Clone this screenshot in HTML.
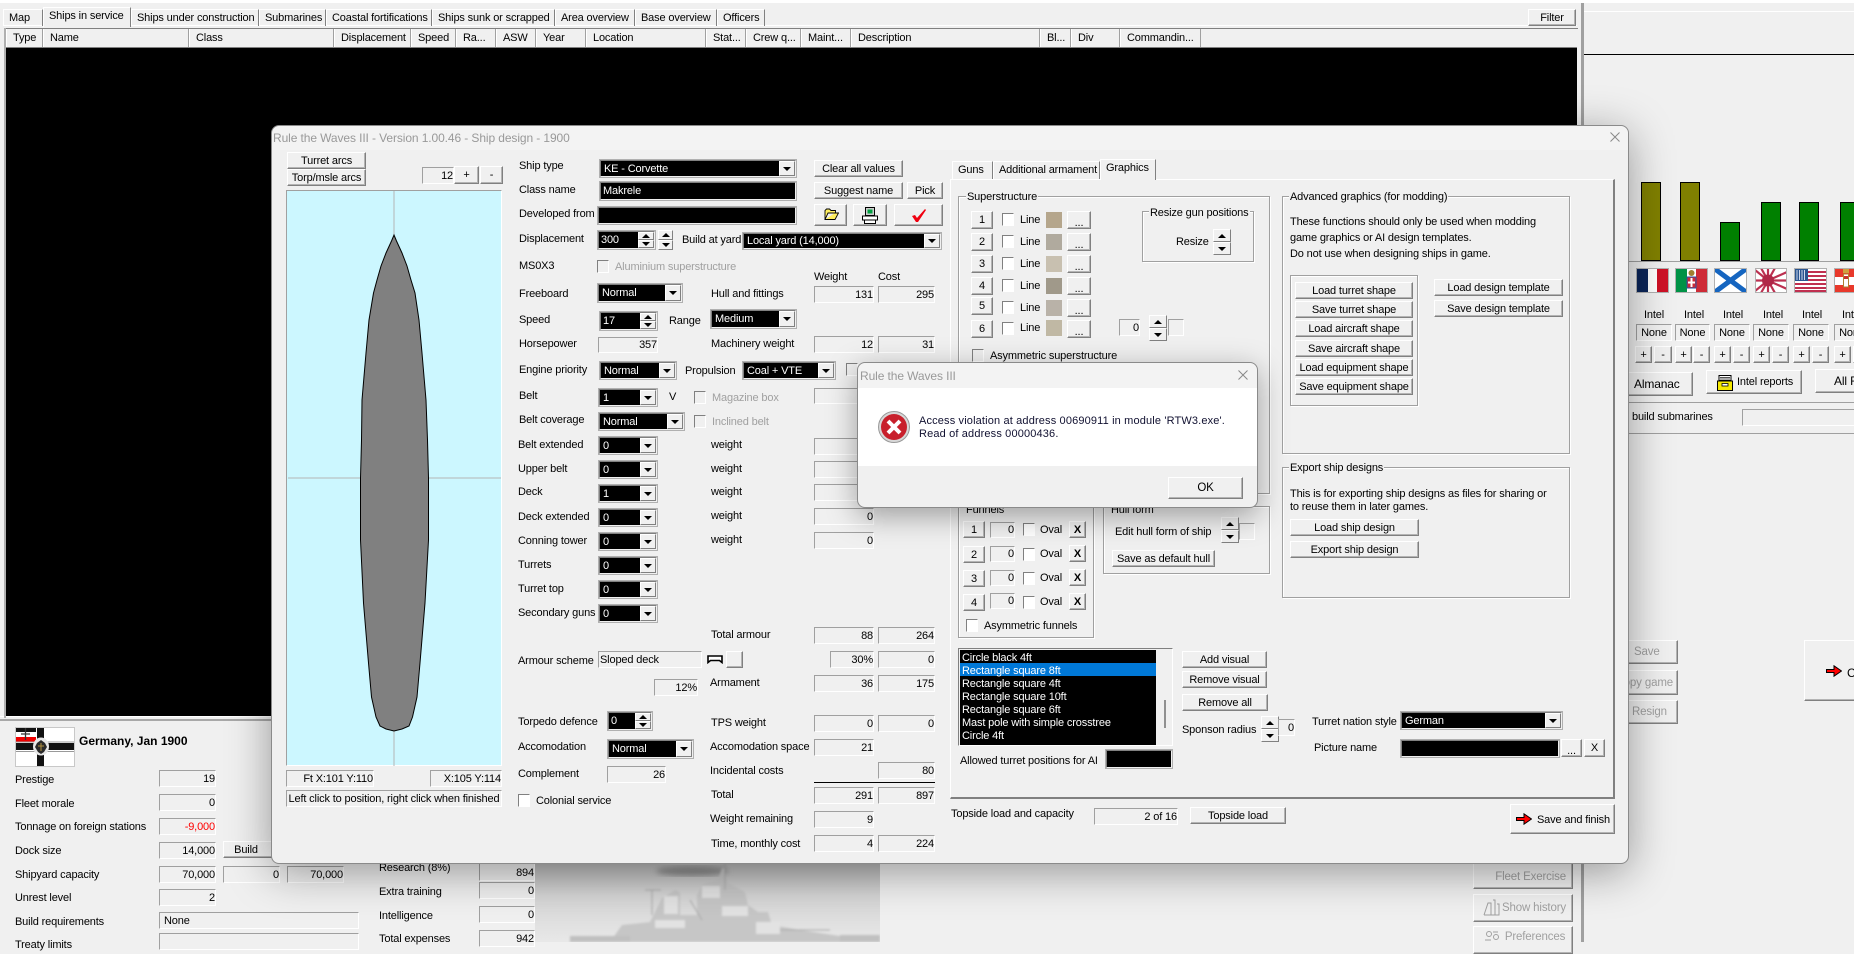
<!DOCTYPE html>
<html><head><meta charset="utf-8"><title>Rule the Waves III</title>
<style>
html,body{margin:0;padding:0}
body{width:1854px;height:942px;background:#f0f0f0;overflow:hidden;position:relative;font:11px/14px "Liberation Sans",sans-serif;color:#000;letter-spacing:-.15px}
div,span,svg{position:absolute;box-sizing:border-box;white-space:nowrap}
.t{height:14px;margin-top:1px}
.d{color:#a0a0a0}
.b{background:#f0f0f0;border:1px solid;border-color:#fff #808080 #808080 #fff;box-shadow:inset -1px -1px 0 #b4b4b4;display:flex;align-items:center;justify-content:center}
.s{background:#f0f0f0;border:1px solid;border-color:#a0a0a0 #fff #fff #a0a0a0;display:flex;align-items:center;justify-content:flex-end}
.g{border:1px solid #a0a0a0;box-shadow:1px 1px 0 #fff,inset 1px 1px 0 #fff}
.n{background:#f0f0f0;padding:0 1px;height:14px}
.k{width:12px;height:13px;background:#fff;border:1px solid;border-color:#808080 #fff #fff #808080}
.kd{background:#f0f0f0}
.c{background:#000;color:#fff;border:2px solid;border-color:#808080 #f0f0f0 #f0f0f0 #808080;outline:1px solid #b0b0b0;outline-offset:-1px;padding-left:3px;display:flex;align-items:center}
.ar{right:0;top:0;bottom:0;width:16px;background:#f0f0f0;border:1px solid;border-color:#fff #808080 #808080 #fff}
.ar:after,.dn:after{content:"";position:absolute;left:50%;top:50%;margin:-2px 0 0 -4px;border:4px solid transparent;border-top:4px solid #000;border-bottom:0}
.up:after{content:"";position:absolute;left:50%;top:50%;margin:-2px 0 0 -4px;border:4px solid transparent;border-bottom:4px solid #000;border-top:0}
.up,.dn{left:0;right:0;height:50%;background:#f0f0f0;border:1px solid;border-color:#fff #808080 #808080 #fff}
.up{top:0}.dn{bottom:0}
.h{top:29px;height:18px;border-right:1px solid #a0a0a0;border-left:1px solid #fff;padding:2px 0 0 6px;line-height:15px}
.tb{top:9px;height:17px;border-top:1px solid #fff;border-right:1px solid #808080;border-left:1px solid #fff;padding:1px 0 0 5px}
.w{background:#000}
</style></head><body>

<div style="left:0;top:0;width:1854px;height:3px;background:#fff"></div>

<!-- top tabs -->
<div style="left:3px;top:25px;width:1574px;height:1px;background:#fff"></div>
<div class="tb" style="left:3px;width:40px">Map</div>
<div class="tb" style="left:43px;width:88px;top:7px;height:20px;background:#f0f0f0">Ships in service</div>
<div class="tb" style="left:131px;width:128px">Ships under construction</div>
<div class="tb" style="left:259px;width:67px">Submarines</div>
<div class="tb" style="left:326px;width:106px">Coastal fortifications</div>
<div class="tb" style="left:432px;width:123px">Ships sunk or scrapped</div>
<div class="tb" style="left:555px;width:80px">Area overview</div>
<div class="tb" style="left:635px;width:82px">Base overview</div>
<div class="tb" style="left:717px;width:48px">Officers</div>
<div class="b" style="left:1528px;top:9px;width:48px;height:17px">Filter</div>

<!-- table -->
<div style="left:4px;top:28px;width:1574px;height:1px;background:#808080"></div>
<div class="h" style="left:6px;width:37px;padding-left:6px">Type</div>
<div class="h" style="left:43px;width:146px">Name</div>
<div class="h" style="left:189px;width:145px">Class</div>
<div class="h" style="left:334px;width:77px">Displacement</div>
<div class="h" style="left:411px;width:45px">Speed</div>
<div class="h" style="left:456px;width:40px">Ra...</div>
<div class="h" style="left:496px;width:40px">ASW</div>
<div class="h" style="left:536px;width:50px">Year</div>
<div class="h" style="left:586px;width:120px">Location</div>
<div class="h" style="left:706px;width:40px">Stat...</div>
<div class="h" style="left:746px;width:55px">Crew q...</div>
<div class="h" style="left:801px;width:50px">Maint...</div>
<div class="h" style="left:851px;width:189px">Description</div>
<div class="h" style="left:1040px;width:31px">Bl...</div>
<div class="h" style="left:1071px;width:49px">Div</div>
<div class="h" style="left:1120px;width:81px">Commandin...</div>
<div class="w" style="left:6px;top:47px;width:1571px;height:669px;border-top:1px solid #808080"></div>
<div style="left:0;top:716px;width:1582px;height:1px;background:#fff"></div>
<div style="left:0;top:719px;width:1582px;height:2px;background:#a8a8a8"></div>
<div style="left:4px;top:28px;width:2px;height:690px;background:#b0b0b0"></div>

<!-- right panel -->
<div style="left:1581px;top:3px;width:3px;height:939px;background:#a0a0a0"></div>
<div style="left:1584px;top:11px;width:270px;height:1px;background:#fff"></div>
<div style="left:1584px;top:54px;width:270px;height:1px;background:#000"></div>
<div style="left:1629px;top:261px;width:225px;height:1px;background:#a0a0a0"></div>
<div style="left:1641px;top:182px;width:20px;height:79px;background:#808000;border:1px solid #000"></div>
<div style="left:1680px;top:182px;width:20px;height:79px;background:#808000;border:1px solid #000"></div>
<div style="left:1720px;top:222px;width:20px;height:39px;background:#008000;border:1px solid #000"></div>
<div style="left:1761px;top:202px;width:20px;height:59px;background:#008000;border:1px solid #000"></div>
<div style="left:1799px;top:202px;width:20px;height:59px;background:#008000;border:1px solid #000"></div>
<div style="left:1840px;top:202px;width:20px;height:59px;background:#008000;border:1px solid #000"></div>

<svg style="left:1636px;top:268px" width="33" height="25" viewBox="0 0 33 25"><rect width="33" height="25" fill="#fff"/><rect x="1" y="1" width="11" height="23" fill="#0b2559"/><rect x="21" y="1" width="11" height="23" fill="#ce1126"/><rect x=".5" y=".5" width="32" height="24" fill="none" stroke="#b0b0b0"/></svg>
<svg style="left:1675px;top:268px" width="33" height="25" viewBox="0 0 33 25"><rect width="33" height="25" fill="#fff"/><rect x="1" y="1" width="11" height="23" fill="#009246"/><rect x="21" y="1" width="11" height="23" fill="#ce2b37"/><rect x="12" y="9" width="9" height="11" fill="#ce2b37" stroke="#2850a0"/><rect x="15.500" y="10" width="2" height="9" fill="#fff"/><rect x="13" y="13.500" width="7" height="2" fill="#fff"/><circle cx="16.500" cy="5" r="3" fill="#a08030"/><rect x=".5" y=".5" width="32" height="24" fill="none" stroke="#b0b0b0"/></svg>
<svg style="left:1714px;top:268px" width="33" height="25" viewBox="0 0 33 25"><rect width="33" height="25" fill="#fff"/><path d="M1 1L32 24M32 1L1 24" stroke="#1565c0" stroke-width="5"/><rect x=".5" y=".5" width="32" height="24" fill="none" stroke="#b0b0b0"/></svg>
<svg style="left:1755px;top:268px" width="32" height="25" viewBox="0 0 32 25"><rect width="32" height="25" fill="#fff"/><g stroke="#bc3050" stroke-width="2.200"><path d="M13 12.500L0 2M13 12.500L0 12.500M13 12.500L0 23M13 12.500L6 0M13 12.500L20 0M13 12.500L32 4M13 12.500L32 12.500M13 12.500L32 21M13 12.500L6 25M13 12.500L20 25M13 12.500L13 0M13 12.500L13 25"/></g><circle cx="13" cy="12.500" r="6" fill="#b02848"/><rect x=".5" y=".5" width="31" height="24" fill="none" stroke="#b0b0b0"/></svg>
<svg style="left:1794px;top:268px" width="33" height="25" viewBox="0 0 33 25"><rect width="33" height="25" fill="#fff"/><g fill="#c03050"><rect y="3" width="33" height="2"/><rect y="7" width="33" height="2"/><rect y="11" width="33" height="2"/><rect y="15" width="33" height="2"/><rect y="19" width="33" height="2"/><rect y="22" width="33" height="2"/></g><rect x="1" y="1" width="13" height="12" fill="#2a5590"/><path d="M3 2v10M5.500 2v10M8 2v10M10.500 2v10" stroke="#cfd8ea"/><rect x=".5" y=".5" width="32" height="24" fill="none" stroke="#b0b0b0"/></svg>
<svg style="left:1834px;top:268px" width="33" height="25" viewBox="0 0 33 25"><rect width="33" height="25" fill="#fff"/><rect y="1" width="33" height="8" fill="#e8392b"/><rect y="17" width="33" height="8" fill="#e8392b"/><rect x="9" y="1" width="6" height="4" fill="#d0a040"/><rect x="9.500" y="6" width="5" height="13" fill="#fff" stroke="#b08030"/><rect x="10" y="8" width="4" height="3" fill="#c83030"/><rect x=".5" y=".5" width="32" height="24" fill="none" stroke="#b0b0b0"/></svg>

<div class="t" style="left:1644px;top:307px">Intel</div>
<div class="t" style="left:1684px;top:307px">Intel</div>
<div class="t" style="left:1723px;top:307px">Intel</div>
<div class="t" style="left:1763px;top:307px">Intel</div>
<div class="t" style="left:1802px;top:307px">Intel</div>
<div class="t" style="left:1842px;top:307px">Intel</div>
<div class="s" style="left:1636px;top:324px;width:36px;height:17px;justify-content:center">None</div>
<div class="s" style="left:1675px;top:324px;width:35px;height:17px;justify-content:center">None</div>
<div class="s" style="left:1714px;top:324px;width:36px;height:17px;justify-content:center">None</div>
<div class="s" style="left:1753px;top:324px;width:36px;height:17px;justify-content:center">None</div>
<div class="s" style="left:1793px;top:324px;width:36px;height:17px;justify-content:center">None</div>
<div class="s" style="left:1834px;top:324px;width:36px;height:17px;justify-content:center">None</div>
<div class="b" style="left:1635px;top:346px;width:17px;height:17px">+</div>
<div class="b" style="left:1654px;top:346px;width:18px;height:17px">-</div>
<div class="b" style="left:1675px;top:346px;width:17px;height:17px">+</div>
<div class="b" style="left:1693px;top:346px;width:17px;height:17px">-</div>
<div class="b" style="left:1714px;top:346px;width:17px;height:17px">+</div>
<div class="b" style="left:1733px;top:346px;width:17px;height:17px">-</div>
<div class="b" style="left:1753px;top:346px;width:17px;height:17px">+</div>
<div class="b" style="left:1772px;top:346px;width:17px;height:17px">-</div>
<div class="b" style="left:1793px;top:346px;width:17px;height:17px">+</div>
<div class="b" style="left:1812px;top:346px;width:17px;height:17px">-</div>
<div class="b" style="left:1834px;top:346px;width:17px;height:17px">+</div>
<div class="b" style="left:1853px;top:346px;width:17px;height:17px">-</div>
<div class="b" style="left:1600px;top:372px;width:93px;height:24px"></div>
<div class="t" style="left:1634px;top:376px;font-size:12px">Almanac</div>
<div class="b" style="left:1706px;top:370px;width:96px;height:24px"></div>
<svg style="left:1717px;top:375px" width="16" height="16" viewBox="0 0 16 16"><path d="M2 .5h12v5H2z" fill="#fff" stroke="#000"/><path d="M3 2.500h10M3 4h10" stroke="#555"/><rect x=".5" y="6" width="15" height="9.500" fill="#f5e800" stroke="#000"/><rect x="5" y="8.500" width="6" height="2.500" fill="#fff" stroke="#000" stroke-width=".8"/></svg>
<div class="t" style="left:1737px;top:374px">Intel reports</div>
<div class="b" style="left:1815px;top:369px;width:60px;height:24px"></div>
<div class="t" style="left:1834px;top:373px;font-size:12px">All Fl</div>
<div style="left:1629px;top:402px;width:225px;height:1px;background:#a0a0a0"></div>
<div class="t" style="left:1632px;top:409px">build submarines</div>
<div class="s" style="left:1742px;top:409px;width:130px;height:17px"></div>
<div style="left:1629px;top:433px;width:225px;height:1px;background:#a0a0a0"></div>

<div class="b d" style="left:1600px;top:640px;width:78px;height:24px;justify-content:flex-start;padding-left:33px;font-size:11.500px">Save</div>
<div class="b d" style="left:1600px;top:670px;width:78px;height:25px;justify-content:flex-end;padding-right:4px;font-size:11.500px">Copy game</div>
<div class="b d" style="left:1600px;top:700px;width:78px;height:24px;justify-content:flex-start;padding-left:31px;font-size:11.500px">Resign</div>
<div class="b" style="left:1804px;top:640px;width:70px;height:61px"></div>
<svg style="left:1826px;top:665px" width="16" height="12" viewBox="0 0 16 12"><path d="M.5 4.500h7.500V.8L15.500 6 8 11.200V7.500H.5z" fill="#f00" stroke="#000"/></svg>
<div class="t" style="left:1847px;top:665px;font-size:12px">Continue</div>

<div class="b d" style="left:1473px;top:858px;width:100px;height:31px;justify-content:flex-end;padding:6px 6px 0 0;font-size:11.500px">Fleet Exercise</div>
<div class="b d" style="left:1473px;top:894px;width:100px;height:28px;padding-left:22px;font-size:11.500px">Show history</div>
<svg style="left:1483px;top:899px" width="17" height="17" viewBox="0 0 17 17" fill="none" stroke="#a0a0a0"><path d="M1 16L5 4h3v12M10 1h2v15h-2M14 5h2v11h-2M1 16h15"/></svg>
<div class="b d" style="left:1473px;top:926px;width:100px;height:28px;padding:0 0 6px 24px;font-size:11.500px">Preferences</div>
<svg style="left:1484px;top:931px" width="17" height="11" viewBox="0 0 17 11" fill="none" stroke="#a0a0a0"><circle cx="5" cy="3" r="2.500"/><circle cx="12" cy="6" r="2.500"/><path d="M1 9h6M9 1h5"/></svg>

<!-- bottom-left panel -->
<svg style="left:15px;top:727px" width="60" height="40" viewBox="0 0 60 40"><rect width="60" height="40" fill="#fff"/><rect width="21" height="5" fill="#111"/><rect y="10" width="21" height="5" fill="#e00"/><rect x="22" width="7" height="40" fill="#111"/><rect y="16" width="60" height="7" fill="#111"/><rect y="14.500" width="60" height="1" fill="#999"/><rect y="24" width="60" height="1" fill="#999"/><ellipse cx="26" cy="19.500" rx="8" ry="9" fill="#e8e8e8"/><path d="M26 13l-4 3-2 4 3 5 3 2 3-2 3-5-2-4z" fill="#2a2a2a"/><path d="M26 16v8M23 19h6" stroke="#b09040"/><path d="M10.500 1v12M6 7h9" stroke="#333" stroke-width="1.300"/><rect x=".5" y=".5" width="59" height="39" fill="none" stroke="#c8c8c8"/></svg>
<div class="t" style="left:79px;top:733px;font-weight:bold;font-size:12px;letter-spacing:0">Germany, Jan 1900</div>
<div class="t" style="left:15px;top:772px">Prestige</div>
<div class="t" style="left:15px;top:796px">Fleet morale</div>
<div class="t" style="left:15px;top:819px">Tonnage on foreign stations</div>
<div class="t" style="left:15px;top:843px">Dock size</div>
<div class="t" style="left:15px;top:867px">Shipyard capacity</div>
<div class="t" style="left:15px;top:890px">Unrest level</div>
<div class="t" style="left:15px;top:914px">Build requirements</div>
<div class="t" style="left:15px;top:937px">Treaty limits</div>
<div class="s" style="left:159px;top:770px;width:57px;height:17px">19</div>
<div class="s" style="left:159px;top:794px;width:57px;height:17px">0</div>
<div class="s" style="left:159px;top:818px;width:57px;height:17px;color:#f00">-9,000</div>
<div class="s" style="left:159px;top:842px;width:57px;height:17px">14,000</div>
<div class="s" style="left:159px;top:866px;width:57px;height:17px">70,000</div>
<div class="s" style="left:159px;top:889px;width:57px;height:17px">2</div>
<div class="b" style="left:223px;top:841px;width:60px;height:17px;padding-right:14px">Build</div>
<div class="s" style="left:223px;top:866px;width:57px;height:17px">0</div>
<div class="s" style="left:287px;top:866px;width:57px;height:17px">70,000</div>
<div class="s" style="left:159px;top:912px;width:200px;height:17px;justify-content:flex-start;padding-left:4px">None</div>
<div class="s" style="left:159px;top:933px;width:200px;height:17px"></div>
<div class="t" style="left:379px;top:860px">Research (8%)</div>
<div class="s" style="left:479px;top:858px;width:56px;height:23px;padding-top:6px">894</div>
<div class="t" style="left:379px;top:884px">Extra training</div>
<div class="s" style="left:479px;top:882px;width:56px;height:17px">0</div>
<div class="t" style="left:379px;top:908px">Intelligence</div>
<div class="s" style="left:479px;top:906px;width:56px;height:17px">0</div>
<div class="t" style="left:379px;top:931px">Total expenses</div>
<div class="s" style="left:479px;top:930px;width:56px;height:17px">942</div>

<!-- ship picture -->
<svg style="left:535px;top:855px" width="345" height="87" viewBox="535 855 345 87">
<defs><linearGradient id="sky" x1="0" y1="0" x2="0" y2="1"><stop offset="0" stop-color="#b4b4b4"/><stop offset=".45" stop-color="#d4d4d4"/><stop offset="1" stop-color="#e8e8e8"/></linearGradient><filter id="bl"><feGaussianBlur stdDeviation="3"/></filter><filter id="bl2"><feGaussianBlur stdDeviation="1.100"/></filter></defs>
<rect x="535" y="855" width="345" height="87" fill="url(#sky)"/>
<ellipse cx="692" cy="871" rx="36" ry="5" fill="#8c8c8c" filter="url(#bl)"/>
<g filter="url(#bl2)">
<path d="M610 942L622 925 650 922 662 898 675 890 680 892 680 915 697 915 697 895 703 884 718 880 722 868 725 868 727 882 745 892 748 905 758 912 768 912 772 925 800 930 840 936 850 942Z" fill="#c6c6c6"/>
<path d="M664 896h14v18h-14zM702 886h18v12h-18zM722 906h26v10h-26zM756 922h24v12h-24zM655 920h30v8h-30z" fill="#e2e2e2"/>
<path d="M652 890v25M645 890h16M725 860v30M690 900l12 20M780 930h50" stroke="#a8a8a8" fill="none"/>
<path d="M570 936h60v6h-60zM840 935h40v7h-40z" fill="#c0c0c0"/>
</g>
</svg>

<!-- Ship design dialog -->
<div style="left:271px;top:125px;width:1358px;height:739px;background:#f0f0f0;border:1px solid #8a8a8a;border-radius:8px;box-shadow:0 8px 44px rgba(0,0,0,.38)"></div>
<div style="left:272px;top:126px;width:1356px;height:24px;background:#f3f3f3;border-radius:8px 8px 0 0"></div>
<div class="t" style="left:273px;top:130px;font-size:12px;color:#999;letter-spacing:-.1px">Rule the Waves III - Version 1.00.46 - Ship design - 1900</div>
<svg style="left:1610px;top:132px" width="10" height="10" viewBox="0 0 10 10"><path d="M.5.500l9 9M9.500.500l-9 9" stroke="#888"/></svg>

<div class="b" style="left:287px;top:152px;width:79px;height:17px">Turret arcs</div>
<div class="b" style="left:287px;top:169px;width:79px;height:17px">Torp/msle arcs</div>
<div class="s" style="left:422px;top:167px;width:32px;height:17px">12</div>
<div class="b" style="left:454px;top:166px;width:25px;height:18px">+</div>
<div class="b" style="left:480px;top:166px;width:23px;height:18px">-</div>

<div style="left:286px;top:190px;width:216px;height:576px;background:#ccf7ff;border:1px solid;border-color:#a0a0a0 #fff #fff #a0a0a0"></div>
<svg style="left:287px;top:190px" width="215" height="576" viewBox="287 190 215 576">
<path d="M394 191V766M288 478H501" stroke="#b4b4b4"/>
<path d="M394 235L396.500 241 402 253 407 266 411 280 415 293 419 320 422 353 426 400 427.500 440 428.500 478 428.500 540 425 603 420 663 417 697 412.500 717 409 726 402 729 394 731 386 729 380 726 376 717 371.500 697 368.500 663 363.500 603 360.500 540 360.500 478 361.500 440 362 400 366 353 369 320 373.500 293 377 280 381 266 386 253 391.500 241Z" fill="#808080" stroke="#000"/>
</svg>
<div class="s" style="left:286px;top:770px;width:88px;height:17px">Ft X:101 Y:110</div>
<div class="s" style="left:430px;top:770px;width:72px;height:17px">X:105 Y:114</div>
<div class="s" style="left:286px;top:790px;width:216px;height:17px;justify-content:center;white-space:nowrap">Left click to position, right click when finished</div>

<!-- labels column -->
<div class="t" style="left:519px;top:158px">Ship type</div>
<div class="t" style="left:519px;top:182px">Class name</div>
<div class="t" style="left:519px;top:206px">Developed from</div>
<div class="t" style="left:519px;top:231px">Displacement</div>
<div class="t" style="left:519px;top:258px">MS0X3</div>
<div class="t" style="left:519px;top:286px">Freeboard</div>
<div class="t" style="left:519px;top:312px">Speed</div>
<div class="t" style="left:519px;top:336px">Horsepower</div>
<div class="t" style="left:519px;top:362px">Engine priority</div>
<div class="t" style="left:519px;top:388px">Belt</div>
<div class="t" style="left:519px;top:412px">Belt coverage</div>
<div class="t" style="left:518px;top:437px">Belt extended</div>
<div class="t" style="left:518px;top:461px">Upper belt</div>
<div class="t" style="left:518px;top:484px">Deck</div>
<div class="t" style="left:518px;top:509px">Deck extended</div>
<div class="t" style="left:518px;top:533px">Conning tower</div>
<div class="t" style="left:518px;top:557px">Turrets</div>
<div class="t" style="left:518px;top:581px">Turret top</div>
<div class="t" style="left:518px;top:605px">Secondary guns</div>
<div class="t" style="left:518px;top:653px">Armour scheme</div>
<div class="t" style="left:518px;top:714px">Torpedo defence</div>
<div class="t" style="left:518px;top:739px">Accomodation</div>
<div class="t" style="left:518px;top:766px">Complement</div>
<div class="k" style="left:518px;top:794px"></div>
<div class="t" style="left:536px;top:793px">Colonial service</div>

<!-- inputs -->
<div class="c" style="left:599px;top:159px;width:198px;height:19px">KE - Corvette<span class="ar"></span></div>
<div class="c" style="left:599px;top:181px;width:198px;height:20px;padding-left:2px">Makrele</div>
<div class="c" style="left:597px;top:206px;width:200px;height:19px"></div>
<div class="c" style="left:597px;top:230px;width:59px;height:20px;padding-left:2px">300<div style="right:0;top:0;bottom:0;width:16px"><span class="up"></span><span class="dn"></span></div></div>
<div style="left:658px;top:230px;width:15px;height:20px"><span class="up"></span><span class="dn"></span></div>
<div class="t" style="left:682px;top:232px">Build at yard</div>
<div class="c" style="left:742px;top:232px;width:200px;height:18px">Local yard (14,000)<span class="ar"></span></div>
<div class="k kd" style="left:597px;top:260px"></div>
<div class="t d" style="left:615px;top:259px">Aluminium superstructure</div>
<div class="t" style="left:814px;top:269px">Weight</div>
<div class="t" style="left:878px;top:269px">Cost</div>
<div class="c" style="left:597px;top:283px;width:86px;height:20px">Normal<span class="ar"></span></div>
<div class="t" style="left:711px;top:286px">Hull and fittings</div>
<div class="s" style="left:814px;top:286px;width:60px;height:17px">131</div>
<div class="s" style="left:878px;top:286px;width:57px;height:17px">295</div>
<div class="c" style="left:599px;top:311px;width:59px;height:20px;padding-left:2px">17<div style="right:0;top:0;bottom:0;width:16px"><span class="up"></span><span class="dn"></span></div></div>
<div class="t" style="left:669px;top:313px">Range</div>
<div class="c" style="left:710px;top:309px;width:87px;height:20px">Medium<span class="ar"></span></div>
<div class="s" style="left:598px;top:337px;width:60px;height:16px">357</div>
<div class="t" style="left:711px;top:336px">Machinery weight</div>
<div class="s" style="left:814px;top:336px;width:60px;height:17px">12</div>
<div class="s" style="left:878px;top:336px;width:57px;height:17px">31</div>
<div class="c" style="left:599px;top:361px;width:78px;height:19px">Normal<span class="ar"></span></div>
<div class="t" style="left:685px;top:363px">Propulsion</div>
<div class="c" style="left:742px;top:361px;width:94px;height:19px">Coal + VTE<span class="ar"></span></div>
<div class="k kd" style="left:846px;top:363px"></div>
<div class="c" style="left:598px;top:388px;width:60px;height:19px">1<span class="ar"></span></div>
<div class="t" style="left:669px;top:389px">V</div>
<div class="k kd" style="left:694px;top:391px"></div>
<div class="t d" style="left:712px;top:390px">Magazine box</div>
<div class="s" style="left:814px;top:388px;width:60px;height:16px"></div>
<div class="c" style="left:598px;top:412px;width:87px;height:19px">Normal<span class="ar"></span></div>
<div class="k kd" style="left:694px;top:415px"></div>
<div class="t d" style="left:712px;top:414px">Inclined belt</div>

<div class="c" style="left:598px;top:436px;width:60px;height:19px">0<span class="ar"></span></div>
<div class="c" style="left:598px;top:460px;width:60px;height:19px">0<span class="ar"></span></div>
<div class="c" style="left:598px;top:484px;width:60px;height:19px">1<span class="ar"></span></div>
<div class="c" style="left:598px;top:508px;width:60px;height:19px">0<span class="ar"></span></div>
<div class="c" style="left:598px;top:532px;width:60px;height:19px">0<span class="ar"></span></div>
<div class="c" style="left:598px;top:556px;width:60px;height:19px">0<span class="ar"></span></div>
<div class="c" style="left:598px;top:580px;width:60px;height:19px">0<span class="ar"></span></div>
<div class="c" style="left:598px;top:604px;width:60px;height:19px">0<span class="ar"></span></div>

<div class="t" style="left:711px;top:437px">weight</div>
<div class="t" style="left:711px;top:461px">weight</div>
<div class="t" style="left:711px;top:484px">weight</div>
<div class="t" style="left:711px;top:508px">weight</div>
<div class="t" style="left:711px;top:532px">weight</div>
<div class="s" style="left:814px;top:438px;width:60px;height:17px"></div>
<div class="s" style="left:814px;top:461px;width:60px;height:17px"></div>
<div class="s" style="left:814px;top:484px;width:60px;height:17px"></div>
<div class="s" style="left:814px;top:508px;width:60px;height:17px">0</div>
<div class="s" style="left:814px;top:532px;width:60px;height:17px">0</div>

<div class="t" style="left:711px;top:627px">Total armour</div>
<div class="s" style="left:814px;top:627px;width:60px;height:17px">88</div>
<div class="s" style="left:878px;top:627px;width:57px;height:17px">264</div>
<div class="s" style="left:598px;top:651px;width:104px;height:17px;justify-content:flex-start;padding-left:1px">Sloped deck</div>
<svg style="left:707px;top:655px" width="16" height="9" viewBox="0 0 16 9"><path d="M1 1h14v6.500l-2.500-2h-9L1 7.500z" fill="#fff" stroke="#000" stroke-width="1.600"/></svg>
<div class="b" style="left:726px;top:651px;width:17px;height:17px"></div>
<div class="s" style="left:830px;top:651px;width:44px;height:17px">30%</div>
<div class="s" style="left:878px;top:651px;width:57px;height:17px">0</div>
<div class="s" style="left:654px;top:679px;width:44px;height:17px">12%</div>
<div class="t" style="left:710px;top:675px">Armament</div>
<div class="s" style="left:814px;top:675px;width:60px;height:17px">36</div>
<div class="s" style="left:878px;top:675px;width:57px;height:17px">175</div>
<div class="t" style="left:711px;top:715px">TPS weight</div>
<div class="s" style="left:814px;top:715px;width:60px;height:17px">0</div>
<div class="s" style="left:878px;top:715px;width:57px;height:17px">0</div>
<div class="t" style="left:710px;top:739px">Accomodation space</div>
<div class="s" style="left:814px;top:739px;width:60px;height:17px">21</div>
<div class="t" style="left:710px;top:763px">Incidental costs</div>
<div class="s" style="left:878px;top:762px;width:57px;height:17px">80</div>
<div style="left:814px;top:782px;width:121px;height:1px;background:#000"></div>
<div class="t" style="left:711px;top:787px">Total</div>
<div class="s" style="left:814px;top:787px;width:60px;height:17px">291</div>
<div class="s" style="left:878px;top:787px;width:57px;height:17px">897</div>
<div class="t" style="left:710px;top:811px">Weight remaining</div>
<div class="s" style="left:814px;top:811px;width:60px;height:17px">9</div>
<div class="t" style="left:711px;top:836px">Time, monthly cost</div>
<div class="s" style="left:814px;top:835px;width:60px;height:17px">4</div>
<div class="s" style="left:878px;top:835px;width:57px;height:17px">224</div>

<div class="c" style="left:607px;top:711px;width:46px;height:20px;padding-left:2px">0<div style="right:0;top:0;bottom:0;width:16px"><span class="up"></span><span class="dn"></span></div></div>
<div class="c" style="left:607px;top:739px;width:87px;height:20px">Normal<span class="ar"></span></div>
<div class="s" style="left:607px;top:766px;width:59px;height:17px">26</div>

<!-- toolbar buttons -->
<div class="b" style="left:814px;top:160px;width:89px;height:17px">Clear all values</div>
<div class="b" style="left:814px;top:182px;width:89px;height:17px">Suggest name</div>
<div class="b" style="left:907px;top:182px;width:36px;height:17px">Pick</div>
<div class="b" style="left:814px;top:204px;width:33px;height:22px"></div>
<svg style="left:824px;top:208px" width="15" height="13" viewBox="0 0 15 13"><path d="M1 11.500V2.500L2.500 1h3L7 2.500h4.500V5H4L1 11.500h10L14.500 5H11" fill="#ffef60" stroke="#000" stroke-width=".9"/></svg>
<div class="b" style="left:853px;top:204px;width:34px;height:22px"></div>
<svg style="left:862px;top:207px" width="16" height="17" viewBox="0 0 16 17"><rect x="3.500" y=".5" width="9" height="8" fill="#ccc" stroke="#000"/><rect x="5.500" y="2.500" width="5" height="4" fill="#00a040"/><rect x=".5" y="9" width="15" height="4" fill="#fff" stroke="#000"/><rect x="2.500" y="13" width="11" height="3.500" fill="#fff" stroke="#000"/></svg>
<div class="b" style="left:894px;top:204px;width:49px;height:22px"></div>
<svg style="left:911px;top:208px" width="16" height="15" viewBox="0 0 16 15"><path d="M1 8l3-1 2 3L14 1l1 1-8 12H5z" fill="#f00010"/></svg>

<!-- Right tab control -->
<div style="left:950px;top:179px;width:665px;height:620px;border:1px solid;border-color:#fff #808080 #808080 #fff;border-width:1px 2px 2px 1px"></div>
<div class="tb" style="left:952px;top:161px;width:41px;height:18px">Guns</div>
<div class="tb" style="left:993px;top:161px;width:107px;height:18px">Additional armament</div>
<div class="tb" style="left:1100px;top:159px;width:56px;height:21px;background:#f0f0f0;padding-top:1px">Graphics</div>

<!-- Superstructure -->
<div class="g" style="left:958px;top:196px;width:312px;height:298px"></div>
<div class="n" style="left:966px;top:190px">Superstructure</div>
<div class="b" style="left:971px;top:211px;width:22px;height:18px">1</div>
<div class="b" style="left:971px;top:233px;width:22px;height:18px">2</div>
<div class="b" style="left:971px;top:255px;width:22px;height:18px">3</div>
<div class="b" style="left:971px;top:277px;width:22px;height:18px">4</div>
<div class="b" style="left:971px;top:297px;width:22px;height:18px">5</div>
<div class="b" style="left:971px;top:320px;width:22px;height:18px">6</div>
<div class="k" style="left:1002px;top:213px"></div>
<div class="k" style="left:1002px;top:235px"></div>
<div class="k" style="left:1002px;top:257px"></div>
<div class="k" style="left:1002px;top:279px"></div>
<div class="k" style="left:1002px;top:301px"></div>
<div class="k" style="left:1002px;top:322px"></div>
<div class="t" style="left:1020px;top:212px">Line</div>
<div class="t" style="left:1020px;top:234px">Line</div>
<div class="t" style="left:1020px;top:256px">Line</div>
<div class="t" style="left:1020px;top:278px">Line</div>
<div class="t" style="left:1020px;top:300px">Line</div>
<div class="t" style="left:1020px;top:320px">Line</div>
<div style="left:1046px;top:212px;width:16px;height:16px;background:#b5a68c"></div>
<div style="left:1046px;top:234px;width:16px;height:16px;background:#b0aa9e"></div>
<div style="left:1046px;top:256px;width:16px;height:16px;background:#c8c0b0"></div>
<div style="left:1046px;top:278px;width:16px;height:16px;background:#a0998a"></div>
<div style="left:1046px;top:300px;width:16px;height:16px;background:#b9b2a8"></div>
<div style="left:1046px;top:320px;width:16px;height:16px;background:#c0b8a4"></div>
<div class="b" style="left:1067px;top:211px;width:24px;height:18px;padding-top:5px">...</div>
<div class="b" style="left:1067px;top:233px;width:24px;height:18px;padding-top:5px">...</div>
<div class="b" style="left:1067px;top:255px;width:24px;height:18px;padding-top:5px">...</div>
<div class="b" style="left:1067px;top:277px;width:24px;height:18px;padding-top:5px">...</div>
<div class="b" style="left:1067px;top:299px;width:24px;height:18px;padding-top:5px">...</div>
<div class="b" style="left:1067px;top:320px;width:24px;height:18px;padding-top:5px">...</div>
<div class="g" style="left:1142px;top:211px;width:112px;height:51px"></div>
<div class="n" style="left:1149px;top:206px">Resize gun positions</div>
<div class="t" style="left:1176px;top:234px">Resize</div>
<div style="left:1213px;top:229px;width:18px;height:26px"><span class="up"></span><span class="dn"></span></div>
<div class="s" style="left:1119px;top:319px;width:21px;height:17px">0</div>
<div style="left:1149px;top:315px;width:18px;height:26px"><span class="up"></span><span class="dn"></span></div>
<div class="s" style="left:1168px;top:319px;width:16px;height:17px"></div>
<div class="k kd" style="left:972px;top:349px"></div>
<div class="t" style="left:990px;top:348px">Asymmetric superstructure</div>

<!-- Advanced -->
<div class="g" style="left:1282px;top:196px;width:288px;height:258px"></div>
<div class="n" style="left:1289px;top:190px">Advanced graphics (for modding)</div>
<div class="t" style="left:1290px;top:214px">These functions should only be used when modding</div>
<div class="t" style="left:1290px;top:230px">game graphics or AI design templates.</div>
<div class="t" style="left:1290px;top:246px">Do not use when designing ships in game.</div>
<div class="g" style="left:1290px;top:275px;width:128px;height:131px"></div>
<div class="b" style="left:1295px;top:282px;width:118px;height:17px">Load turret shape</div>
<div class="b" style="left:1295px;top:301px;width:118px;height:17px">Save turret shape</div>
<div class="b" style="left:1295px;top:320px;width:118px;height:17px">Load aircraft shape</div>
<div class="b" style="left:1295px;top:340px;width:118px;height:17px">Save aircraft shape</div>
<div class="b" style="left:1295px;top:359px;width:118px;height:17px">Load equipment shape</div>
<div class="b" style="left:1295px;top:378px;width:118px;height:17px">Save equipment shape</div>
<div class="b" style="left:1434px;top:279px;width:129px;height:17px">Load design template</div>
<div class="b" style="left:1434px;top:300px;width:129px;height:17px">Save design template</div>

<!-- Export -->
<div class="g" style="left:1282px;top:467px;width:288px;height:131px"></div>
<div class="n" style="left:1289px;top:461px">Export ship designs</div>
<div class="t" style="left:1290px;top:486px">This is for exporting ship designs as files for sharing or</div>
<div class="t" style="left:1290px;top:499px">to reuse them in later games.</div>
<div class="b" style="left:1290px;top:519px;width:129px;height:17px">Load ship design</div>
<div class="b" style="left:1290px;top:541px;width:129px;height:17px">Export ship design</div>

<!-- Funnels -->
<div class="g" style="left:958px;top:506px;width:136px;height:132px"></div>
<div class="n" style="left:965px;top:503px">Funnels</div>
<div class="b" style="left:963px;top:521px;width:22px;height:17px">1</div>
<div class="b" style="left:963px;top:546px;width:22px;height:17px">2</div>
<div class="b" style="left:963px;top:570px;width:22px;height:17px">3</div>
<div class="b" style="left:963px;top:594px;width:22px;height:17px">4</div>
<div class="s" style="left:990px;top:522px;width:25px;height:16px">0</div>
<div class="s" style="left:990px;top:546px;width:25px;height:16px">0</div>
<div class="s" style="left:990px;top:570px;width:25px;height:16px">0</div>
<div class="s" style="left:990px;top:593px;width:25px;height:16px">0</div>
<div class="k" style="left:1023px;top:523px"></div>
<div class="k" style="left:1023px;top:548px"></div>
<div class="k" style="left:1023px;top:572px"></div>
<div class="k" style="left:1023px;top:596px"></div>
<div class="t" style="left:1040px;top:522px">Oval</div>
<div class="t" style="left:1040px;top:546px">Oval</div>
<div class="t" style="left:1040px;top:570px">Oval</div>
<div class="t" style="left:1040px;top:594px">Oval</div>
<div class="b" style="left:1069px;top:521px;width:17px;height:17px;font-weight:bold">X</div>
<div class="b" style="left:1069px;top:545px;width:17px;height:17px;font-weight:bold">X</div>
<div class="b" style="left:1069px;top:569px;width:17px;height:17px;font-weight:bold">X</div>
<div class="b" style="left:1069px;top:593px;width:17px;height:17px;font-weight:bold">X</div>
<div class="k" style="left:966px;top:619px"></div>
<div class="t" style="left:984px;top:618px">Asymmetric funnels</div>

<!-- Hull form -->
<div class="g" style="left:1103px;top:506px;width:167px;height:68px"></div>
<div class="n" style="left:1110px;top:503px">Hull form</div>
<div class="t" style="left:1115px;top:524px">Edit hull form of ship</div>
<div style="left:1221px;top:517px;width:18px;height:26px"><span class="up"></span><span class="dn"></span></div>
<div class="s" style="left:1239px;top:523px;width:16px;height:17px"></div>
<div class="b" style="left:1112px;top:550px;width:103px;height:17px">Save as default hull</div>

<!-- Visual list -->
<div style="left:958px;top:648px;width:215px;height:98px;background:#f0f0f0;border:1px solid;border-color:#808080 #fff #fff #808080"></div>
<div class="w" style="left:960px;top:650px;width:196px;height:95px"></div>
<div style="left:960px;top:663px;width:196px;height:13px;background:#0078d7"></div>
<div class="t" style="left:962px;top:650px;color:#fff">Circle black 4ft</div>
<div class="t" style="left:962px;top:663px;color:#fff">Rectangle square 8ft</div>
<div class="t" style="left:962px;top:676px;color:#fff">Rectangle square 4ft</div>
<div class="t" style="left:962px;top:689px;color:#fff">Rectangle square 10ft</div>
<div class="t" style="left:962px;top:702px;color:#fff">Rectangle square 6ft</div>
<div class="t" style="left:962px;top:715px;color:#fff">Mast pole with simple crosstree</div>
<div class="t" style="left:962px;top:728px;color:#fff">Circle 4ft</div>
<div style="left:1164px;top:700px;width:2px;height:28px;background:#909090"></div>
<div class="t" style="left:960px;top:753px">Allowed turret positions for AI</div>
<div class="c" style="left:1105px;top:749px;width:68px;height:20px"></div>
<div class="b" style="left:1182px;top:651px;width:85px;height:17px">Add visual</div>
<div class="b" style="left:1182px;top:671px;width:85px;height:17px">Remove visual</div>
<div class="b" style="left:1182px;top:694px;width:86px;height:17px">Remove all</div>
<div class="t" style="left:1182px;top:722px">Sponson radius</div>
<div style="left:1261px;top:716px;width:18px;height:26px"><span class="up"></span><span class="dn"></span></div>
<div class="s" style="left:1278px;top:719px;width:17px;height:17px">0</div>
<div class="t" style="left:1312px;top:714px">Turret nation style</div>
<div class="c" style="left:1400px;top:711px;width:163px;height:19px">German<span class="ar"></span></div>
<div class="t" style="left:1314px;top:740px">Picture name</div>
<div class="c" style="left:1400px;top:739px;width:160px;height:19px"></div>
<div class="b" style="left:1561px;top:739px;width:21px;height:18px;padding-top:5px">...</div>
<div class="b" style="left:1584px;top:739px;width:21px;height:18px">X</div>

<div class="t" style="left:951px;top:806px">Topside load and capacity</div>
<div class="s" style="left:1094px;top:808px;width:84px;height:17px">2 of 16</div>
<div class="b" style="left:1190px;top:807px;width:96px;height:17px">Topside load</div>
<div class="b" style="left:1510px;top:804px;width:105px;height:30px"></div>
<svg style="left:1516px;top:813px" width="16" height="12" viewBox="0 0 16 12"><path d="M.5 4.500h7.500V.8L15.500 6 8 11.200V7.500H.5z" fill="#f00" stroke="#000"/></svg>
<div class="t" style="left:1537px;top:812px">Save and finish</div>

<!-- Message box -->
<div style="left:857px;top:362px;width:401px;height:146px;background:#f0f0f0;border:1px solid #8a8a8a;border-radius:8px;box-shadow:0 8px 30px rgba(0,0,0,.35)"></div>
<div style="left:858px;top:388px;width:399px;height:78px;background:#fff"></div>
<div style="left:858px;top:363px;width:399px;height:25px;background:#f3f3f3;border-radius:8px 8px 0 0"></div>
<div class="t" style="left:860px;top:368px;font-size:12px;color:#999;letter-spacing:-.1px">Rule the Waves III</div>
<svg style="left:1238px;top:370px" width="10" height="10" viewBox="0 0 10 10"><path d="M.5.500l9 9M9.500.500l-9 9" stroke="#888"/></svg>
<svg style="left:878px;top:411px" width="32" height="32" viewBox="0 0 32 32"><circle cx="16" cy="16" r="15.500" fill="#d8d8d8" stroke="#999"/><circle cx="16" cy="16" r="13" fill="#c8202c"/><path d="M10 10l12 12M22 10L10 22" stroke="#fff" stroke-width="4"/></svg>
<div class="t" style="left:919px;top:413px;color:#101030;letter-spacing:.15px">Access violation at address 00690911 in module 'RTW3.exe'.</div>
<div class="t" style="left:919px;top:426px;color:#101030;letter-spacing:.15px">Read of address 00000436.</div>
<div class="b" style="left:1168px;top:477px;width:75px;height:22px;font-size:11.500px">OK</div>

</body></html>
